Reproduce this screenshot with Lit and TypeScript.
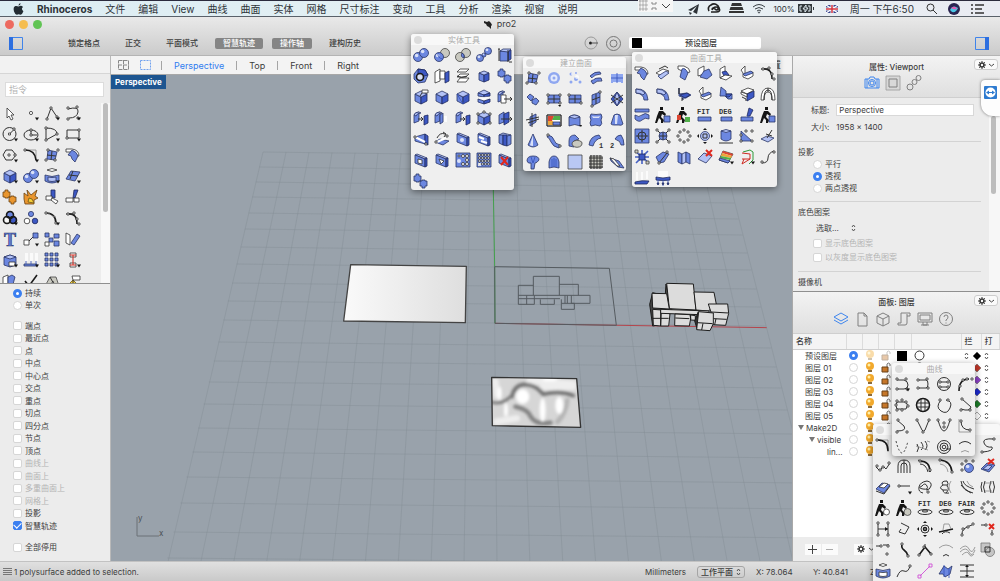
import { LitElement, html, svg, css, nothing } from "lit";
import { customElement, state } from "lit/decorators.js";
import { classMap } from "lit/directives/class-map.js";

/* ---- icon drawing helpers: every icon is a list of "class|path" parts on a 16x16 canvas ---- */
const c = (x: number, y: number, r: number) =>
  `M${x - r} ${y}a${r} ${r} 0 1 0 ${2 * r} 0a${r} ${r} 0 1 0 ${-2 * r} 0z`;
const n = (...p: number[]) => {
  let d = "";
  for (let i = 0; i < p.length; i += 2) d += `M${p[i] - 1} ${p[i + 1] - 1}h2v2h-2z`;
  return `w|${d}`;
};
const ball = (x: number, y: number, r: number) =>
  `b|${c(x, y, r)};h|${c(x - r * 0.3, y - r * 0.35, r * 0.4)}`;
const cube = "b|M2 5l6 3v7l-6-3z;d|M14 5l-6 3v7l6-3z;l|M8 2l6 3-6 3-6-3z";
const slab = "l|M2 3l2-1 10 4-2 1z;b|M2 3l10 4v8l-10-4z;d|M12 7l2-1v8l-2 1z";
const leftSlab = "b|M1 5q1-3 5-3v9l-5 2z;l|M1 5q1-3 5-3l2 1q-4 0-5 3z";
const more = "f|M12 12.5h4l-2 3z";
const man = "f|M5 0h3v3h-3zM4 4h4l3 3-1 2-3-2-1 3 3 3-1 3h-2v-3l-2-2-2 5h-2l2-7z";
const lid = "k|M1 12a7 2.5 0 1 0 14 0a7 2.5 0 1 0 -14 0zM5 11a3 1 0 1 0 6 0a3 1 0 1 0 -6 0z";
const pieces = (cls: string, dx: number) =>
  `${cls}|M${1 + dx} 3h2v-2h3v2h2v5h-2v1h-3v-1h-2zM${7 + dx} 8h2v-1h3v1h2v5h-2v2h-3v-2h-2z`;

const icons: Record<string, string> = {
  union: `${ball(5, 10, 4.5)};${ball(11, 6, 4.5)}`,
  diff: `a|${c(11, 6, 4.5)};${ball(5, 10, 4.5)};x|M4 6a5 5 0 0 0 5 6`,
  inter: `a|${c(11, 6, 4.5)};a|${c(5, 10, 4.5)};b|M7 6q3 1 2 5-4-1-2-5z`,
  split: `${ball(4, 11, 3.5)};${ball(12, 4, 3.5)};${ball(8, 8, 2)}`,
  boxcut: "d|M11 5l3-2v9l-3 2z;b|M3 4h8v10h-8z;l|M3 4l3-2h8l-3 3z;k|M2 2v12M11 3v12M1 2h2M12 15h3",
  ring: `b|M1 6l4-5 7 1 3 5-3 7-7 1-4-4z;d|M5 1l7 1 3 5-4 1-6-2z;h|${c(7, 9, 3.5)};B|${c(7, 9, 3.5)}`,
  shell: "w|M1 4l5-3v12l-5 2z;w|M6 3h5v8h-5z;d|M11 5l4-2v10l-4 2z",
  stack: "w|M2 4h9l3-3h-9zM2 9h9l3-3h-9z;w|M2 14h9l3-4h-9z;k|M2 8q4 3 10 0",
  tinycube: "b|M3 5l5 2v7l-5-2z;d|M13 5l-5 2v7l5-2z;l|M8 3l5 2-5 2-5-2z",
  join: pieces("b", 0),
  joinO: pieces("o", 0),
  cubetag: `${cube};w|M9 1h6v3h-6z;k|M9 4l-2 3`,
  cube,
  cubefold: `${cube};x|M2 5l6 10 6-10`,
  cubesplit: "l|M8 1l6 3-6 2-6-2z;b|M2 4l6 2v2l-6-1zM2 10l6 2v3l-6-2z;d|M14 4l-6 2v2l6-1zM14 10l-6 2v3l6-2z;h|M3 9q6-2 11-1l-6 3z",
  slabarrow: `${leftSlab};w|M4 6h5v8h-5z;k|M7 10h8M13 8l2 2-2 2`,
  slabpair: `${leftSlab};d|M11 6l4-1v8l-4 2z;k|M5 9h5M8 7l2 2-2 2`,
  slabone: `${leftSlab};b|M6 5l3-2v9l-3 2z;h|M10 6h3v6h-3z`,
  cubenodes: `${cube};${n(2, 4, 14, 4, 2, 13, 14, 13, 8, 2)}`,
  slabthrough: "b|M2 5l5-3v10l-5 2z;d|M7 4l5-2v10l-5 3z;k|M4 9h11M13 7l2 2-2 2",
  wedge: `b|M2 6l10-3v10l-10-3z;d|M12 3l3 2v9l-3-1z;W|M2 6l10 5;${n(2, 6, 13, 13)}`,
  rotate: `b|M1 11l5-3 9 2-6 4z;W|M3 11l9-4;k|M3 7q3-6 8-4M9 1l3 2-2 3;${n(13, 5, 2, 11)}`,
  slabhole: `${slab};h|${c(7, 9, 2)}`,
  slabslot: `${slab};W|M3 6l5 2M5 10l6 2`,
  slabbend: "l|M2 4l4-2 8 2-4 2z;b|M2 4h4v10l-4-2z;d|M6 4h4v11l-4-1z;b|M10 5l4-1v9l-4 2z",
  slabsq: `${slab};w|M5 7l4 1v4l-4-1z`,
  slabtri: `${slab};w|M5 7l5 2-3 3z`,
  grid1: `b|M1 1h14v14h-14z;h|${c(4, 9, 2)};w|${c(8, 4, 1.5)}${c(12, 4, 1.5)}${c(8, 12, 1.5)}${c(12, 12, 1.5)}${c(12, 8, 1.5)}${c(4, 4, 1)}`,
  grid2: `b|M1 1h14v14h-14z;w|${[3, 6, 9, 12].map((x) => [3, 6, 9, 12].map((y) => c(x + 0.5, y, 1.1)).join("")).join("")};h|M2 11h3v3h-3z`,
  slabdel: `${slab};r|M4 5l7 8M11 5l-7 8`,

  srfpt: `b|M4 3l9 2-2 8-8-1z;k|M8 4l-1 9M3 8l9 1;${n(4, 3, 14, 3, 11, 13, 2, 13)}`,
  glowball: `v|${c(8, 8, 6)};h|${c(8, 8, 3.5)};v|${c(8, 8, 1.5)}`,
  glowpts: `v|${c(4, 4, 1.5)}${c(9, 9, 2)}${c(4, 12, 1.5)}${c(13, 12, 1.5)}${c(9, 3, 1)};h|${c(5, 4, 1)}${c(10, 7, 2)}`,
  glowstrip: "b|M2 6q5-5 10-4l1 2q-6 0-9 4z;b|M3 11q5-4 10-3l1 3q-5-1-9 3z;h|M4 8q4-3 9-2v1q-5-1-8 3z",
  glowpatch: "v|M2 4h12v9h-12z;h|M4 12h8v1h-8z;x|M8 3v10M2 8h12",
  gems: "b|M2 6l3-3 4 3-3 4zM7 9l4-2 3 3-3 4-4-2z",
  rectcorner: `b|M2 4h12v8h-12z;k|M8 4v8M2 8h12;${n(2, 4, 14, 4, 14, 12, 2, 12)};f|M12 14h3l-1 2z`,
  rectdiag: `b|M2 4h12v8h-12z;k|M8 4v8M2 8h12;${n(2, 4, 14, 12)}`,
  rectvert: `b|M4 4l8-3v10l-8 4z;k|M4 9l8-3M8 3v10;${n(4, 15, 12, 1)}`,
  gem: "d|M8 1l6 7-6 7-6-7z;l|M8 1l3 7-3 7-3-7z;k|M2 4l12 8M14 4l-12 8",
  vplane: "b|M5 5l6-3v8l-6 4z;k|M1 8l13-3M3 11l11-4M7 1v14",
  rainbow: "w|M1 3h14v11h-14z;rd|M2 4h6l-2 5h-4z;gn|M8 4h6v4h-8z;or|M2 9h5v4h-5z;b|M7 10h7v3h-7z;k|M1 3h14v11h-14z",
  cylwall: "b|M2 5q5-4 11 0v9q-5-3-11 0z;l|M2 5q5-4 11 0-5 3-11 0z;f|M12 13h3l-1 2z",
  blob: "b|M3 2q5 1 10 0 2 3 0 6 2 4-1 6-5-2-9 0-2-3 0-6-2-3 0-6z;h|M4 4q4 1 8 0l-1 2q-3 0-6 0z",
  bell: "b|M5 3q3-2 6 0l3 9q-2 2-4 1h-5q-2 0-3-1z;h|M6 3h3l-1 9h-2z",
  cone: "b|M8 1l5 11q-5 4-10 0z;h|M8 2v11q-2 0-3-1z",
  sweep: `b|M2 2q5 1 6 5t6 5l-1 3q-6-1-8-6t-4-5z;${n(2, 2, 14, 13)}`,
  revolve: `b|M2 13v-5q0-6 6-6l4 4-5 2v6z;a|M7 8a5 3.5 0 1 0 8 3a5 3 0 0 0 -8 -3z`,
  arch1: "b|M1 12q1-9 10-10l2 3q-6 1-8 8z;t|11 15 1",
  arch2: "b|M6 6q2-4 6-4 3 4 3 10h-3q0-4-6-6z;t|1 15 2",
  parachute: "b|M2 7q0-5 6-5t6 4q-2 3-4 3l-1 6h-3v-6q-3 1-4-2z;x|M6 3l2 6 2-6",
  tomb: "b|M3 14v-6q1-6 5-6t5 6v6q-5-2-10 0z;x|M6 13v-8M8 13v-9M10 13v-8",
  pane: "p|M1 1h14v14h-14z",
  mesh: "a|M2 2h12v12h-12z;k|M1 4h14M1 7h14M1 10h14M1 13h14M3 1v14M6 1v14M9 1v14M12 1v14",
  blade: "b|M1 4l9 3 5 7-6-1-7-6z;w|M1 4l4 1 6 7-3 0z",

  sfillet: "w|M1 2h6q7 1 7 7l-4 0q0-3-4-4l-5 0z;b|M7 3q5 2 6 6l-3 6-3-3q0-4-4-4z",
  schamfer: "w|M1 8l7-4 6 2-7 5z;l|M3 11l8-5 3 2-8 6z;k|M4 4l6-3 3 2",
  sblend: "w|M2 1h6q6 2 6 6l-4 1-8-4z;b|M6 4q3-2 6 4l-3 7-5-3z",
  quarter: "w|M1 4l6-3v8l-6 2z;b|M7 6l5-2 3 6-5 4-7-2z",
  lplane: "w|M2 4l5-3v9l-5 3z;d|M4 7l4-1 3 4-4 3z;w|M7 10l7 1-6 4-6-2z",
  steps: "w|M2 5l4-4v8l8-2v4l-5 3-5-2v-4z;b|M4 9l8-3 2 2-8 3z",
  curvenodes: `B|M3 4q9-1 9 10;k|M1 4h9;${n(3, 4, 9, 3, 12, 9, 14, 14)}`,
  crescent: "b|M2 3q11-1 12 11h-4q0-6-8-7z;l|M2 3q6 0 9 4l-2 2q-2-2-7-2z",
  chair: "b|M3 2v6l8-1 4 2-5 3h-3v2l-1-3-3-1z;d|M4 9l7-2 3 2-5 3z;k|M3 2v6M6 12v3",
  zig: "b|M3 1l5 4v3h6v5h-4l-3-3h-5z;d|M8 8h6l-3 3h-3z",
  match: "w|M2 5l7-3 6 2-7 4z;d|M8 8l7-3v6l-7 4z;w|M2 6l6 2v3l-6-3z;k|M3 11l4 2v2",
  arch: "w|M1 14q0-12 7-12t7 12h-3q0-8-4-8t-4 8z;k|M4 14q0-10 4-10t4 10M8 2v4",
  ribbon: "b|M1 2h14v3h-14z;b|M1 8q4 3 7 0t7 0v4q-4-2-7 1t-7-1z",
  manbox: `${man};b|M9 9h6v6h-6z`,
  mancolor: `${man};rd|M1 8h4v5h-4z;gn|M9 10h5v5h-5z`,
  fit: "t|0 7 FIT;b|M1 10h13v4h-13z",
  deg: "t|1 7 DEG;b|M3 10h11v4h-11z",
  trimsrf: "d|M10 1l4 2-3 6h-3z;b|M2 10h12v4h-12z;x|M9 8v3",
  target: `b|M1 1h14v14h-14z;k|${c(8, 8, 4)}M8 2v12M2 8h12`,
  expand: `b|${c(8, 8, 4)};k|M1 1l4 4M15 1l-4 4M1 15l4-4M15 15l-4-4M8 4v8M4 8h8;${n(2, 2, 14, 2, 2, 14, 14, 14)}`,
  circpts: n(8, 2, 12, 4, 14, 8, 12, 12, 8, 14, 4, 12, 2, 8, 4, 4),
  gumball: `l|${c(8, 8, 4.5)};k|M6 6h4v4h-4z;f|M6 2l2-2 2 2zM6 14l2 2 2-2zM2 6l-2 2 2 2zM14 6l2 2-2 2z`,
  cylinder: "b|M3 3v8q5 4 10 0v-8z;l|M3 3q5-3 10 0-5 3-10 0z;k|M1 15h14",
  trinodes: `b|M2 13v-10l11 10z;${n(2, 13, 2, 7, 7, 3, 13, 13, 13, 3)}`,
  needle: "l|M1 11l6-3 7 2-6 4z;k|M12 2l-5 8M6 6l6 2",
  spider: "X|M1 2l14 12M14 2l-12 12M8 1v14M1 8h14;d|M5 5h6v6h-6z;a|M1 1h3v3h-3zM12 12h3v3h-3z",
  bow: `b|M1 8l7-5 6 2-5 8-5 1z;k|M4 14l8-10;${n(12, 3, 4, 14)}`,
  foldmap: "b|M2 3l4 2v10l-4-2z;l|M6 5l4-2v10l-4 2z;b|M10 3l4 2v10l-4-2z",
  srfdel: "l|M1 10l6-6 8 3-6 7z;r|M9 1l6 6M15 1l-6 6",
  rainsrf: `w|M5 2l10 3-5 9-9-3z;rd|M5 2l10 3-1 2-10-3z;or|M4 4l10 3-1 2-10-2z;gn|M3 7l10 2-1 2-10-2z;b|M2 9l10 3-2 2-9-3z;${more}`,
  redgreen: `G|M4 3l7-2 3 2v8l-4 4;R|M3 4l8 1v5l-8 5 2-5M3 10h8;${more}`,
  scurve: `k|M2 14q6 0 6-5t6-7;${n(2, 13, 14, 3)}`,
  rainarrows: "h|M2 2h2v8h-2zM7 2h2v8h-2zM12 1h2v8h-2z;d|M1 12q7-2 14-1l-2 3h-12z",
  raindown: "h|M3 1h10v6h-10z;d|M1 7q7 2 14 0v3q-7 1-14 0z;x|M3 9v6M8 9v7M13 9v6;d|M2 13h2l-1 2zM7 13h2l-1 2zM12 13h2l-1 2z",

  cursor: "w|M5 3v10l2-2 2 4 2-1-2-4h3z",
  point: `w|${c(8, 8, 1.6)};${more}`,
  polyline: `k|M3 14l4-11 6 9;${n(3, 14, 7, 3, 13, 12)};${more}`,
  curve: `k|M3 4q11-3 10 3t-9 6;${n(3, 3, 12, 2, 13, 13, 3, 14)};${more}`,
  circle: `k|${c(7.5, 8, 6.5)}M7.5 8l4-4;${n(7.5, 8, 12, 3)};${more}`,
  ellipse: `k|M1 9a7 5 0 1 0 14 0a7 5 0 1 0 -14 0M8 9h6M8 9v-5;${n(8, 9, 8, 4)};${more}`,
  arc: `k|M2 2q11 0 11 6l-11 6z;${n(2, 2, 2, 14, 13, 8)};${more}`,
  rect: `k|M2 4h12v8h-12z;${n(2, 12, 14, 4)};${more}`,
  polygon: `k|M4 3h6l4 5-4 5h-6l-3-5z;${n(7, 8, 13, 8)};${more}`,
  fillet: `g|M2 3h11v11;B|M2 3q10 0 11 10;${n(2, 3)};${more}`,
  cubeM: `${cube};${more}`,
  unionM: `${ball(5, 10, 4.5)};${ball(11, 6, 4.5)};${more}`,
  tube: `w|M3 2q5-3 10 0-5 3-10 0z;b|M1 7q7 3 14 0v6q-7 4-14 0z;l|M4 9q4 1 8 0v4q-4 1-8 0z;${more}`,
  sheet: `b|M1 11l5-8 9 1-5 9z;k|M4 7l9 1M8 3l-3 8;${more}`,
  burst: "o|M1 4l4 3-1-6 4 5 6-5-2 6 3 2-4 2 0 4h-9l-1-5z;y|M5 13l1-4 3 1 2 4z",
  trim: "d|M7 1h4v8l-4-1z;w|M2 7h6v4h-6z;w|M8 9l6 3-2 3-5-4z",
  splitc: "d|M9 1h4l-3 8h-2z;w|M1 9h7v4h-7zM9 9h5v4h-5z",
  venn: `d|${c(11, 10, 3.5)};b|${c(8, 5, 3.5)};B|${c(8, 5, 3.5)}${c(5, 10, 3.5)}${c(11, 10, 3.5)};h|${c(5, 10, 2)};${more}`,
  dots: `b|${c(8, 4, 2.6)};w|${c(4, 11, 2.8)};d|${c(12, 11, 2.8)}`,
  arcs: `B|M2 3q10 0 10 11;g|M1 3h5M8 6l4 1;${n(2, 3, 12, 13)};${more}`,
  bigT: "T|2 15 T",
  move: `k|M4 12l8-8;w|M1 9h5v5h-5z;b|M10 2h5v5h-5z;${more}`,
  copies: "b|M1 2h4v4h-4zM10 3h5v4h-5zM5 7h4v4h-4zM10 10h5v5h-5z;w|M1 11h4v4h-4z",
  mirror: "w|M1 2l4 2v10l-4-2z;b|M6 12l6-9 3 2-6 9z",
  cubebag: `b|M2 5l6-2 6 2v8l-6 2-6-2z;l|M2 5l6-2 6 2-6 2z;w|M7 10h6v4h-6z;${more}`,
  rain: `h|M2 1h3v8h-3zM7 1h3v8h-3zM12 1h3v8h-3z;b|M1 12h13v2h-13z;x|M3 9v3M8 9v3M13 9v3;${more}`,
  ninegrid: `b|${[1, 6, 11].map((x) => [1, 6, 11].map((y) => `M${x} ${y}h3v3h-3z`).join("")).join("")};${more}`,
  ibeam: `w|M5 1h6v4h-6zM5 11h6v4h-6z;R|M8 3v10M5 3h6M5 13h6;${more}`,
  twosheets: "w|M1 4l5-2v11l-5 2z;b|M6 4l4-2 3 2-3 11h-4z",
  check: "B|M2 8l4 5 8-11",
  rollers: "a|M1 13l5-9h6l3 9h-4l-2-5-4 6z;k|M6 4l5 9",
  paint: "y|M2 13l6-6 6 6z;w|M7 3h8v4h-7z;k|M8 7v3",

  c1: `k|M3 13h7q4 0 4-4t-4-5h-7;${n(3, 3, 12, 3, 3, 13, 13, 13)};${more}`,
  c2: `k|M3 4h8q2 0 2 4t-2 4h-8;${n(3, 4, 12, 3, 3, 12, 13, 12)}`,
  c3: `k|${c(8, 8, 6.5)}M4 6h7M4 11h7;${n(4, 6, 12, 6, 4, 11, 12, 11)}`,
  c4: `B|M2 15q0-12 10-12;${n(3, 10, 6, 4, 10, 3, 15, 3)}`,
  c5: `k|M3 5h9q3 3 0 7h-9q-2-3 0-7;${n(3, 4, 8, 3, 12, 5, 14, 9, 8, 13, 3, 13, 2, 8)}`,
  c6: `B|${c(8, 8, 6.5)};k|M2 6h12M2 10h12M6 2v12M10 2v12`,
  c7: `k|M5 3q-6 7 0 11t9-3-4-8;${n(4, 3, 12, 3)}`,
  c8: `k|M5 2l9 8q-1 5-10 2;${n(5, 2, 4, 13, 13, 13)}`,
  c9: `k|M3 2l7 6q3 5-7 5;${n(4, 2, 3, 14, 13, 14)}`,
  c10: `k|M2 2l5 10q1 3 3 0l4-10;${n(2, 2, 14, 2, 8, 14)}`,
  c11: `k|M2 2q6 22 12 0;${n(2, 2, 14, 2, 8, 5, 8, 9)}`,
  c12: `g|M2 1v13h12;k|M4 3q0 9 9 9;${n(4, 3, 13, 12)}`,
  c13: "D|M2 2q6 24 12 0",
  c14: "k|M2 5q3 4 0 8M6 3q4 5 0 8M10 2q4 5 0 9;g|M1 7l12 4M12 2l3 1",
  c15: `k|${c(8, 8, 6.5)}${c(8, 8, 4)}${c(8, 8, 1.8)}M10 10l5 0`,
  c16: "k|M2 5q6-5 12 0;g|M4 13q4-3 8 0",
  l1: `g|M2 3h11v12;B|M3 3q10 0 10 11;${n(2, 3)}`,
  l2: `k|M14 2q-12-1-10 4t8 4q2 4-9 5;${n(14, 2, 2, 15)}`,
  l3: `k|M1 9l4 4 3-5 3 3 4-6;${n(2, 8, 5, 12, 8, 9, 14, 5)}`,
  l4: "k|M2 15v-7q0-6 6-6t6 6v7M5 15v-7q0-3 3-3t3 3v7M8 2v13",
  l5: `B|M3 3q10 0 10 11;k|M3 6q6 0 8 8M1 2l4 2;${n(3, 3, 13, 12)}`,
  l6: `B|M2 2q11 1 12 12;g|M2 6q7 1 8 8;${n(2, 2, 14, 14)}`,
  l7: `${ball(10, 10, 4.5)};${n(3, 6, 7, 3, 14, 3, 3, 12)}`,
  l8: "b|M1 11l6-6 8 2-6 7z;l|M3 11l5-4 4 1-4 4z;r|M8 1l6 5M14 1l-6 5",
  l9: "b|M1 10l6-6 8 2-6 8z;w|M4 8l5-4 4 1-4 4z;k|M1 12l8 3 6-8",
  l10: `k|M3 7h11;${n(3, 7)};${more}`,
  l11: `k|M6 14q-5-1-4-6t8-6q5 1 4 5t-5 4M5 7q3-4 5 0t-4 3-1-3;${n(11, 13)}`,
  l12: "k|M9 2q-7 0-4 4-5 3 0 5 0 4 6 3M9 2q2 3 0 5 3 3-1 7M5 6h4M5 11h4;g|M13 2q-4 6 0 12",
  l13: "k|M2 2q1 9 12 12M2 6q3 5 10 8M4 2q1 5 11 8;g|M8 2q1 4 6 6",
  l14: "k|M5 2q-3 6 0 12M11 2q-3 6 0 12M13 2q3 6 0 12M2 3q-2 5 0 10;g|M5 4h7M5 12h7",
  l15: `${man};w|${c(11.5, 12, 3)}`,
  l16: `${man};a|${c(11.5, 12, 3.5)}`,
  l17: `t|1 6 FIT;${lid}`,
  l18: `t|1 6 DEG;${lid}`,
  l19: `t|-1 6 FAIR;${lid}`,
  l21: `k|M3 1v14M13 1v14M3 8h10;f|M10 6l3 2-3 2z;${n(3, 2, 3, 14, 13, 2, 13, 14)}`,
  l22: "k|M5 2l8 4-4 7-6-2 2-3",
  l23: `k|${c(8, 8, 4)};B|${c(8, 8, 1.5)};f|M6 2l2-2 2 2zM6 14l2 2 2-2zM2 6l-2 2 2 2zM14 6l2 2-2 2z`,
  l24: "B|M1 11l14-3;g|M5 9l1-6h5l2 5;k|M4 13q3-4 8-1",
  l25: `k|M3 14q-1-7 10-10;${n(3, 14, 4, 8, 9, 6, 14, 3)}`,
  l26: `k|M1 4h5M12 9v5;r|M9 3l5 5M14 3l-5 5;${n(6, 4, 12, 13)}`,
  l27: `k|M1 4h5M8 3h6;${n(6, 4, 13, 4, 12, 12)}`,
  l28: `B|M6 2q-1 4 2 6t4 6;${n(6, 2, 12, 14)}`,
  l29: `B|M2 13l6-8 6 7;${n(2, 13, 7, 5, 14, 12)};k|M8 2v3`,
  l30: "g|M1 6q7-6 14 0;k|M5 14q3-3 6 0",
  l31: "g|M1 7q6-6 9 0t6-2M1 10q6-6 9 0t6-2M3 13q5-5 7-1t5 0",
  l32: `e|M1 1h9v9h-9z;e|${c(10, 10, 4.5)};k|M5 5h5v5h-5z`,
  l33: "w|M4 2q4-3 8 0-4 3-8 0z;b|M1 6q7 3 14 0v7q-7 4-14 0z;w|M4 9q4 1 8 0v4q-4 1-8 0z",
  l34: `k|M1 14q3-8 7-6t6-5;${n(14, 3)}`,
  l35: "M|M3 13l10-10M1 12h3v3h-3zM12 1h3v3h-3z",
  l36: "b|M1 11l5-8 4 3 4-3-2 8-5 3-2-3z;x|M6 2v12M11 5v10",
  l37: "k|M1 2h14M1 8h14M1 14h14M8 2v12;f|M6 4h4l-2-2zM6 12h4l-2 2z",

  layers: "u|M1 6l7-4 7 4-7 4zM1 9l7 4 7-4",
  page: "s|M4 2h6l3 3v10h-9zM10 2v3h3",
  box: "s|M2 5l6-3 6 3v7l-6 3-6-3zM2 5l6 3 6-3M8 8v7",
  scroll: "s|M5 2h9v3h-3v7q0 2-2 2h-7v-2h3zM11 5v-2",
  monitor: "s|M1 2h14v9h-14zM3 4h10v5h-10zM6 11v3h4v-3M4 14h8",
  help: `s|${c(8, 8, 6.5)}M6 6q0-2 2-2t2 2-2 3v1M8 11.5v1`,
  camera: `u|M1 4h4l1-2h4l1 2h4v9h-14zM3 4v9M13 4v9${c(8, 8, 3.5)}${c(8, 8, 2)}`,
  frame: "q|M1 1h14v14h-14z;s|M4 4h8v8h-8z",
  chain: `s|${c(4, 12, 3)}${c(8.5, 7, 2.5)}${c(12.5, 3, 2.5)}`,
};

const drawPart = (part: string) => {
  const [cls, d] = part.split("|");
  if (cls === "t" || cls === "T") {
    const [x, y, label] = d.split(" ");
    return svg`<text class=${cls === "T" ? "i-T" : "i-t"} x=${x} y=${y}>${label}</text>`;
  }
  return svg`<path class=${"i-" + cls} d=${d}></path>`;
};
const icon = (name: string) => html`<svg class="ico" viewBox="0 0 16 16" aria-hidden="true">
  ${(icons[name] ?? "").split(";").filter(Boolean).map(drawPart)}
</svg>`;

const words = (s: string) => s.trim().split(/\s+/);
const solidTools = words(`union diff inter split boxcut ring shell stack tinycube join cubetag cube cubefold cubesplit slabarrow
  slabpair slabone slabpair cubenodes slabthrough wedge rotate slabhole slabslot slabbend slabsq slabtri grid1 grid2 slabdel join`);
const surfaceTools = words(`srfpt glowball glowpts glowstrip glowpatch gems rectcorner rectdiag rectvert gem vplane rainbow
  cylwall blob bell cone sweep revolve arch1 arch2 parachute tomb pane mesh blade`);
const surfaceEdit = words(`sfillet schamfer sblend quarter lplane steps curvenodes crescent crescent chair steps zig match arch
  ribbon manbox mancolor fit deg trimsrf manbox target expand circpts gumball cylinder trinodes needle
  spider bow foldmap srfdel rainsrf redgreen scurve rainarrows raindown`);
const mainTools = words(`cursor point polyline curve circle ellipse arc rect polygon fillet srfpt sfillet cubeM unionM tube sheet
  joinO burst trim splitc venn dots arcs curvenodes bigT move copies mirror cubebag rain ninegrid ibeam twosheets check rollers paint`);
const curveTools = words("c1 c2 c3 c4 c5 c6 c7 c8 c9 c10 c11 c12 c13 c14 c15 c16");
const curveEdit = words(`l1 c2 c3 c4 c5 l2 l3 l4 l5 l6 l7 l8 l9 l10 l11 l12 l13 l14 l15 l16 l17 l18 l19 circpts
  l21 l22 l23 l24 l25 l26 l27 l28 l29 l30 l31 l32 l33 l34 l35 l36 l37`);

const menus = ["文件", "编辑", "View", "曲线", "曲面", "实体", "网格", "尺寸标注", "变动", "工具", "分析", "渲染", "视窗", "说明"];
const modes: [string, boolean][] = [["锁定格点", false], ["正交", false], ["平面模式", false], ["智慧轨迹", true], ["操作轴", true], ["建构历史", false]];
const snaps: [string, string][] = [
  ["端点", ""], ["最近点", ""], ["点", ""], ["中点", ""], ["中心点", ""], ["交点", ""], ["重点", ""], ["切点", ""],
  ["四分点", ""], ["节点", ""], ["顶点", ""], ["曲线上", "off"], ["曲面上", "off"], ["多重曲面上", "off"], ["网格上", "off"],
  ["投影", ""], ["智慧轨迹", "on"],
];
const layerRows = [
  { name: "预设图层", level: 1, current: true, color: "#000000" },
  { name: "图层 01", level: 1, current: false, color: "#c0392b" },
  { name: "图层 02", level: 1, current: false, color: "#8e44c8" },
  { name: "图层 03", level: 1, current: false, color: "#1d2bd0" },
  { name: "图层 04", level: 1, current: false, color: "#1e7d2a" },
  { name: "图层 05", level: 1, current: false, color: "#ffffff" },
  { name: "Make2D", level: 0, current: false, color: "" },
  { name: "visible", level: 2, current: false, color: "" },
  { name: "lin...", level: 3, current: false, color: "" },
];

/* construction-plane grid in perspective */
const rowsY = [152, 167, 182, 197, 213, 229, 247, 264, 283, 301, 320, 342, 361, 382, 404, 428, 452, 477, 503, 532, 558];
const gridPath = () => {
  let d = "";
  for (let k = -10; k <= 10; k++) d += `M${493 + 23 * k} ${154 + k / 5}L${497 + 33 * k} 566`;
  for (const y of rowsY) {
    const t = (y - 152) / 408;
    d += `M${263 - 96 * t} ${y}L${723 + 104 * t} ${y + 6}`;
  }
  return d;
};

@customElement("app-root")
export class AppRoot extends LitElement {
  @state() private view = "Perspective";

  static styles = css`
    :host { display: block; height: 100vh; overflow: hidden; position: relative; color: #3c3c3c;
      font: 8px/12px Inter, "Noto Sans CJK SC", sans-serif; background: #ececec; }
    * { box-sizing: border-box; }
    button, input, select { font: inherit; color: inherit; margin: 0; padding: 0; border: 0; background: none; }
    button { display: block; white-space: nowrap; }
    select { appearance: none; }
    svg { display: block; overflow: visible; }
    .app { height: 100%; display: flex; flex-direction: column; }

    .menubar { flex: none; display: flex; align-items: center; height: 17px; padding: 0 16px 0 13px; gap: 13px;
      font-size: 10px; background: linear-gradient(90deg, #dcedf3, #e6f0f3 60%, #e9ebf2); color: #2e3338;
      border-top: 1px solid #2b2b3d; border-bottom: 1px solid #59616a; }
    .menubar button { flex: none; line-height: 14px; }
    .menubar .appname { font-weight: 700; }
    .extras { margin-left: auto; display: flex; align-items: center; gap: 8px; }
    .extras .clock { padding: 0 4px; }
    .power { display: flex; align-items: center; gap: 3px; font-size: 8px; padding-right: 4px; }
    .screenshot { position: absolute; left: 638px; top: 0; width: 35px; height: 12px; background: #f6f6f6; }

    .titlebar { flex: none; background: linear-gradient(#e9e9e9, #cbcbcb); border-bottom: 1px solid #b4b4b4; }
    .title { display: grid; grid-template-columns: 1fr auto 1fr; align-items: center; height: 14px; padding: 0 5px; font-size: 9px; }
    .lights { display: flex; gap: 5px; }
    .lights button { width: 9px; height: 9px; border-radius: 50%; }
    .close { background: #ed6a5f; } .mini { background: #f5bd4f; } .full { background: #61c454; }
    .name { display: flex; align-items: center; gap: 4px; }
    .toolbar { display: flex; align-items: center; justify-content: space-between; height: 24px; padding: 0 11px 0 9px; }
    .modes { display: flex; align-items: center; gap: 9px; }
    .modes .side { margin-right: 28px; }
    .mode { padding: 0 8px; height: 11px; line-height: 11px; border-radius: 2px; font-weight: 500; }
    .mode.on { background: #858585; color: #fff; }
    .layerpick { display: flex; align-items: center; gap: 8px; }
    .combo { display: flex; align-items: center; width: 132px; height: 12px; padding-left: 3px; background: #fff; border-radius: 2px; }
    .combo select { flex: 1; text-align: center; text-align-last: center; height: 12px; font-weight: 500; }
    .black { width: 10px; height: 10px; background: #000; flex: none; }

    .main { flex: 1; min-height: 0; display: grid; grid-template-columns: 111px minmax(0, 1fr) 208px; }
    .left { display: flex; flex-direction: column; min-height: 0; border-right: 1px solid #b9b9b9; background: #ececec; }
    .lefthead { flex: none; height: 18px; background: #f2f2f2; border-bottom: 1px solid #d6d6d6; }
    .command { flex: none; margin: 8px 6px 5px 5px; height: 15px; padding: 0 3px; font-size: 9px; background: #fff; border: 1px solid #dcdcdc; }
    .command::placeholder { color: #b5b5b5; opacity: 1; }
    .toolbox { flex: none; height: 182px; display: flex; justify-content: space-between; overflow: hidden; padding-top: 1px; border-bottom: 1px solid #8f8f8f; }
    .track { width: 9px; background: #f7f7f7; padding: 0 2px; }
    .thumb { height: 109px; border-radius: 3px; background: #bdbdbd; }
    .grid { display: grid; gap: 2px; grid-auto-rows: 19px; align-content: start; }
    .g4 { grid-template-columns: repeat(4, 19px); }
    .g5 { grid-template-columns: repeat(5, 19px); }
    .g6 { grid-template-columns: repeat(6, 19px); }
    .g7 { grid-template-columns: repeat(7, 19px); }
    .tool { display: grid; place-items: center; }
    .ico { width: 16px; height: 16px; }
    .snaps { flex: 1; min-height: 0; display: flex; flex-direction: column; justify-content: space-between; padding: 3px 0 8px 13px; }
    .snaps .group { display: grid; }
    .snaps .many { grid-auto-rows: 1fr; height: 213px; }
    .opt { display: flex; align-items: center; gap: 3px; height: 12px; }
    .opt.off { color: #b4b4b4; }
    .opt input, .dot { appearance: none; display: grid; place-items: center; flex: none; width: 9px; height: 9px; background: #fff; border: 1px solid #d6d6d6; border-radius: 2px; }
    .opt input[type="radio"], .dot { border-radius: 50%; }
    .opt input[type="radio"]:checked, .dot:checked { border: 3px solid #3b7ff0; }
    .opt input[type="checkbox"]:checked { border-color: #3b7ff0; background: #3b7ff0; }
    .opt input[type="checkbox"]:checked::after { content: ""; width: 4px; height: 6px; margin-top: -2px;
      border: solid #fff; border-width: 0 1px 1px 0; transform: rotate(45deg); }

    .center { display: flex; flex-direction: column; min-width: 0; }
    .tabs { flex: none; height: 19px; display: flex; align-items: center; padding: 0 11px 0 7px; font-size: 9px; background: #f3f3f3; border-bottom: 1px solid #a8a8a8; }
    .tabs .layouts { display: flex; gap: 11px; padding-right: 10px; }
    .tabs .tab { height: 9px; line-height: 9px; padding: 0 12px; border-left: 1px solid #a5a5a5; }
    .tabs .tab.on { color: #2f7cf0; }
    .tabs .last { margin-left: auto; }
    .viewport { flex: 1; min-height: 0; position: relative; background: #99a2ab; }
    .scene { width: 100%; height: 100%; overflow: hidden; }
    .vlabel { position: absolute; left: 0; top: 0; height: 14px; padding: 0 4px; line-height: 14px; font-weight: 700; color: #fff; background: #1d5590; }
    .axis { font-size: 8px; fill: #4a4f55; }

    .right { display: flex; flex-direction: column; min-height: 0; min-width: 0; border-left: 1px solid #a9a9a9; background: #ececec; }
    .phead { position: relative; flex: none; display: flex; flex-direction: column; align-items: center; background: linear-gradient(#f3f3f3, #dfdfdf); border-bottom: 1px solid #cfcfcf; }
    .phead .cap { line-height: 12px; font-weight: 500; }
    .phead .icons { display: flex; gap: 5px; }
    .props { flex: none; height: 236px; display: flex; flex-direction: column; border-bottom: 1px solid #8f8f8f; overflow: hidden; }
    .props .phead { height: 42px; padding-top: 5px; gap: 2px; }
    .props .phead .icons { padding-right: 8px; }
    .gear { position: absolute; right: 2px; top: 3px; height: 11px; padding: 0 3px; display: flex; align-items: center; gap: 3px; background: #fafafa; border: 1px solid #cdcdcd; border-radius: 3px; }
    .pbody { flex: 1; min-height: 0; display: flex; justify-content: space-between; }
    .form { flex: 1; padding: 5px 8px 0 5px; }
    .row { display: flex; align-items: center; gap: 7px; height: 14px; padding: 0 7px 0 13px; }
    .row input { flex: 1; min-width: 0; height: 12px; padding: 0 2px; background: #fff; border: 1px solid #d8d8d8; }
    .row + .row { margin-top: 3px; }
    hr { margin: 7px 0 4px; border: 0; border-top: 1px solid #d3d3d3; }
    .indent { padding-left: 15px; }
    .pbody .pick { display: flex; align-items: center; gap: 9px; margin: 4px 0 2px 18px; height: 12px; }
    .pbody .pick select { width: 26px; }
    .pbody .indent .opt.tall { height: 14px; }
    .pbody .track { width: 11px; padding: 18px 4px 0 2px; }
    .pbody .track .thumb { height: 78px; }
    .layers { flex: 1; min-height: 0; display: flex; flex-direction: column; background: #fff; overflow: hidden; }
    .layers .phead { height: 42px; padding-top: 4px; gap: 3px; }
    .layers .phead .icons { padding-right: 6px; }
    table { flex: none; width: 100%; table-layout: fixed; border-collapse: collapse; }
    th { height: 15px; padding: 0 0 0 3px; background: #f4f4f4; font-weight: 500; text-align: left; border-right: 1px solid #dcdcdc; border-bottom: 1px solid #cfcfcf; overflow: hidden; white-space: nowrap; }
    td { height: 12px; padding: 0 0 0 3px; white-space: nowrap; }
    td.lv0 { padding-left: 5px; } td.lv1 { padding-left: 12px; } td.lv2 { padding-left: 16px; } td.lv3 { padding-left: 34px; }
    .cell { display: flex; align-items: center; gap: 2px; height: 12px; }
    .lfoot { margin-top: auto; flex: none; display: flex; align-items: center; gap: 16px; height: 24px; padding: 0 12px; background: #ececec; }
    .seg { display: flex; gap: 1px; }
    .seg button { min-width: 16px; height: 11px; padding: 0 3px; display: flex; align-items: center; gap: 4px; background: #fbfbfb; }
    .status { flex: none; display: flex; align-items: center; height: 20px; padding: 0 3px; gap: 2px; background: linear-gradient(#e0e0e0, #c9c9c9); border-top: 1px solid #c2c2c2; }
    .status .msg { flex: 1; }
    .status .info { display: flex; align-items: center; gap: 11px; width: 352px; }
    .status .info .coord { width: 46px; }
    .plane { display: flex; align-items: center; height: 12px; padding: 0 3px; border: 1px solid #a5a5a5; border-radius: 3px; }
    .plane select { width: 35px; font-weight: 500; }

    .palette { position: absolute; background: #efefef; border-radius: 3px; overflow: hidden; box-shadow: 0 2px 7px rgba(0, 0, 0, 0.45); }
    .palette .bar { display: grid; grid-template-columns: 15px 1fr 15px; align-items: center; height: 11px; padding-left: 3px; text-align: center; color: #a9a9a9; background: #f8f8f8; }
    .palette .bar button { width: 8px; height: 8px; border-radius: 50%; background: #dcdcdc; }
    .solid { left: 411px; top: 34px; }
    .surface { left: 523px; top: 57px; }
    .sedit { left: 632px; top: 52px; }
    .cedit { left: 873px; top: 424px; right: 0; bottom: -2px; }
    .curves { left: 892px; top: 363px; padding-right: 1px; }
    .remote { position: absolute; right: 0; top: 80px; width: 19px; height: 36px; padding: 0 0 12px 3px; background: #fdfdfd; border-radius: 4px 0 0 12px; box-shadow: 0 0 3px rgba(0, 0, 0, 0.5); }

    .ico path { stroke-width: 0.8; stroke-linejoin: round; fill: none; stroke: none; }
    .ico .i-b { fill: #6c87e0; stroke: #2a3566; }
    .ico .i-l { fill: #b3c2f6; stroke: #2a3566; }
    .ico .i-d { fill: #3d58c4; stroke: #1f2a5c; }
    .ico .i-w { fill: #fff; stroke: #333; }
    .ico .i-h { fill: #fff; fill-opacity: 0.75; }
    .ico .i-a { fill: #c9c9c0; stroke: #444; }
    .ico .i-e { fill: #c6c6c6; stroke: #777; }
    .ico .i-v { fill: #8fa7f0; }
    .ico .i-p { fill: #b9c8f4; stroke: #444; }
    .ico .i-k { stroke: #333; stroke-width: 1; }
    .ico .i-B { stroke: #1a1a1a; stroke-width: 1.6; }
    .ico .i-D { stroke: #444; stroke-width: 1; stroke-dasharray: 2 2; }
    .ico .i-g { stroke: #888; }
    .ico .i-f { fill: #151515; }
    .ico .i-x { stroke: #3450ba; }
    .ico .i-X { stroke: #4560c4; stroke-width: 1.6; }
    .ico .i-W { stroke: #fff; stroke-width: 2; }
    .ico .i-r { stroke: #e0281e; stroke-width: 2; }
    .ico .i-R { stroke: #cf2a20; stroke-width: 1; }
    .ico .i-G { stroke: #2f9a3a; stroke-width: 1; }
    .ico .i-M { stroke: #d25fd8; stroke-width: 1; }
    .ico .i-o { fill: #e9962f; stroke: #6a4112; }
    .ico .i-y { fill: #f4cf3a; stroke: #6b551a; }
    .ico .i-rd { fill: #dc4632; } .ico .i-gn { fill: #51b04a; } .ico .i-or { fill: #eda63c; }
    .ico .i-u { stroke: #3f86ee; stroke-width: 1; }
    .ico .i-s { stroke: #808080; stroke-width: 1; }
    .ico .i-q { stroke: #9a9a9a; fill: #d8d8d8; }
    .i-t { font: 700 7px "Liberation Mono", monospace; fill: #333; }
    .i-T { font: 700 18px "Liberation Serif", serif; fill: #5f7ede; stroke: #2a3566; stroke-width: 0.6; }
  `;

  private tools(names: string[], cols: number) {
    return html`<div class="grid g${cols}">
      ${names.map((t) => html`<button class="tool" aria-label=${t}>${icon(t)}</button>`)}
    </div>`;
  }

  private palette(cls: string, title: string, names: string[], cols: number) {
    return html`<section class="palette ${cls}">
      <div class="bar"><button aria-label="关闭"></button><span>${title}</span></div>
      ${this.tools(names, cols)}
    </section>`;
  }

  private stepper() {
    return html`<svg width="5" height="8" viewBox="0 0 5 8" fill="none" stroke="#555"><path d="M1 3l1.500-2L4 3M1 5l1.500 2L4 5"/></svg>`;
  }

  private gear() {
    return html`<svg width="8" height="8" viewBox="0 0 8 8" fill="none" stroke="#333"><circle cx="4" cy="4" r="2" stroke-width="1.600"/><path d="M4 0v1.500M4 6.500V8M0 4h1.500M6.500 4H8M1.200 1.200l1 1M5.800 5.800l1 1M6.800 1.200l-1 1M1.200 6.800l1-1"/></svg>
      <svg width="5" height="4" viewBox="0 0 5 4" fill="none" stroke="#444"><path d="M0 1l2.500 2L5 1"/></svg>`;
  }

  private menubar() {
    return html`<nav class="menubar">
      <svg width="11" height="12" viewBox="0 0 11 12" fill="#222c33"><path d="M7.600 0Q7.700 2 5.500 2.700 5.400.800 7.600 0zM5.600 3.400Q8.500 2 10 4q-2.400 1.800.4 4.200Q9 12 7.400 11.700 5.700 10.900 4 11.700 2.300 12 1 8.500-.2 4 2.400 3.100q1.400-.2 3.200.3z"/></svg>
      <button class="appname">Rhinoceros</button>
      ${menus.map((m) => html`<button>${m}</button>`)}
      <div class="extras">
        <svg width="11" height="12" viewBox="0 0 11 12" fill="#2e3338"><path d="M11 1L0 7l3 1 6-5-4 6 4 2zM1 9l3 1-2 2z"/></svg>
        <svg width="14" height="11" viewBox="0 0 14 11" fill="none" stroke="#222" stroke-width="1.700"><path d="M2 8a4 4 0 0 1 2-6 5 5 0 0 1 8 3q2 4-3 4H4M5 6q1-2 3 0t3 0-2-2-4 3"/></svg>
        <svg width="15" height="11" viewBox="0 0 15 11" fill="#333"><path d="M3 0h9l1 3H2zM1.500 4h12l1 3H.5zM0 8h15v2H0z"/></svg>
        <svg width="14" height="11" viewBox="0 0 14 11" fill="none" stroke="#3a4045"><path d="M1 4q6-5 12 0M3 6q4-3 8 0M5 8q2-2 4 0"/><circle cx="7" cy="9.500" r=".6"/></svg>
        <span class="power">100%
          <svg width="16" height="9" viewBox="0 0 16 9"><path d="M0 0h14v9H0zM15 3h1v3h-1z" fill="#33383c"/><path d="M4 2H2v5h2M10 2h2v5h-2M8 1L5 5h2v3l3-4H8z" fill="none" stroke="#dfe9ef"/></svg></span>
        <svg width="12" height="8" viewBox="0 0 12 8"><path d="M0 0h12v8H0z" fill="#34408c"/><path d="M0 0l12 8M12 0L0 8" stroke="#fff" stroke-width="1.500"/><path d="M6 0v8M0 4h12" stroke="#fff" stroke-width="3"/><path d="M6 0v8M0 4h12" stroke="#d2333f" stroke-width="1.500"/></svg>
        <button class="clock">周一 下午6:50</button>
        <svg width="11" height="11" viewBox="0 0 11 11" fill="none" stroke="#333"><circle cx="4.500" cy="4.500" r="3.500"/><path d="M7 7l4 4"/></svg>
        <svg width="18" height="12" viewBox="-3 0 18 12"><circle cx="6" cy="6" r="6" fill="#2a2450"/><path d="M2 7q3-6 8-2-2 5-6 4z" fill="#4ac6e6"/><path d="M3 5q4-3 6 1-3 1-6-1z" fill="#e35bb0"/></svg>
        <svg width="13" height="10" viewBox="0 0 13 10" stroke="#333" stroke-width="1.300"><path d="M0 1h2M4 1h9M0 5h2M4 5h7M0 9h2M4 9h9"/></svg>
      </div>
    </nav>`;
  }

  private titlebar() {
    return html`<header class="titlebar">
      <div class="title">
        <div class="lights"><button class="close" aria-label="关闭"></button><button class="mini" aria-label="最小化"></button><button class="full" aria-label="全屏"></button></div>
        <div class="name"><svg width="9" height="9" viewBox="0 0 9 9"><path d="M0 1l3 1 2-1 2 2 1 2-1 1v3L5 7 3 6 2 4 0 3z" fill="#222"/></svg>pro2</div>
      </div>
      <div class="toolbar">
        <div class="modes">
          <button class="side" aria-label="左侧栏"><svg width="14" height="13" viewBox="0 0 14 13"><path d="M.5.5h13v12H.5z" fill="none" stroke="#4084ea"/><path d="M0 0h4v13H0z" fill="#2d6fe0"/></svg></button>
          ${modes.map(([label, on]) => html`<button class=${classMap({ mode: true, on })}>${label}</button>`)}
        </div>
        <div class="layerpick">
          <svg width="14" height="14" viewBox="0 0 14 14"><circle cx="7" cy="7" r="6" fill="none" stroke="#999"/><circle cx="6.500" cy="7" r="1.500" fill="#222"/><path d="M7 7h7" stroke="#555"/></svg>
          <svg width="15" height="15" viewBox="0 0 15 15" fill="none" stroke="#777"><circle cx="7.500" cy="7.500" r="7"/><circle cx="7.500" cy="7.500" r="3.500"/></svg>
          <div class="combo"><span class="black"></span><select aria-label="图层"><option>预设图层</option></select></div>
        </div>
        <button aria-label="右侧栏"><svg width="14" height="13" viewBox="0 0 14 13"><path d="M.5.5h13v12H.5z" fill="none" stroke="#4084ea"/><path d="M10 0h4v13h-4z" fill="#2d6fe0"/></svg></button>
      </div>
    </header>`;
  }

  private left() {
    return html`<aside class="left">
      <div class="lefthead"></div>
      <input class="command" placeholder="指令" aria-label="指令" />
      <div class="toolbox">${this.tools(mainTools, 4)}<div class="track"><div class="thumb"></div></div></div>
      <div class="snaps">
        <div class="group">
          <label class="opt"><input type="radio" name="mode" checked />持续</label>
          <label class="opt"><input type="radio" name="mode" />单次</label>
        </div>
        <div class="group many">
          ${snaps.map(([label, s]) => html`<label class=${classMap({ opt: true, off: s === "off" })}>
            <input type="checkbox" ?checked=${s === "on"} ?disabled=${s === "off"} />${label}</label>`)}
        </div>
        <label class="opt"><input type="checkbox" />全部停用</label>
      </div>
    </aside>`;
  }

  private scene() {
    return html`<svg class="scene" viewBox="111 75 681 486" preserveAspectRatio="xMidYMid slice">
      <defs>
        <linearGradient id="sheet"><stop offset="0" stop-color="#fafafa"/><stop offset="1" stop-color="#dedede"/></linearGradient>
        <filter id="soft" x="-50%" y="-50%" width="200%" height="200%"><feGaussianBlur stdDeviation="5"/></filter>
        <filter id="soft2" x="-50%" y="-50%" width="200%" height="200%"><feGaussianBlur stdDeviation="5"/></filter>
        <clipPath id="relief"><path d="M485 382L740 386 752 532 487 527z"/></clipPath>
      </defs>
      <path d=${gridPath()} fill="none" stroke="#828b93" stroke-width="1" opacity=".4"/>
      <path d="M137 517v19h22" fill="none" stroke="#6a7076"/>
      <text class="axis" x="138" y="521">y</text><text class="axis" x="159" y="536">x</text>
      <g transform="translate(330 250) scale(.33333)" stroke-width="3" stroke-linejoin="round">
        <path d="M490-180L494 50 495 220" fill="none" stroke="#43a04c"/>
        <path d="M495 220L1310 233" stroke="#b5444c"/>
        <path d="M62 44L409 49 406 218 41 213z" fill="url(#sheet)" stroke="#444" stroke-width="4"/>
        <path d="M494 50L838 55 859 226 495 220z" fill="none" stroke="#555b60"/>
        <path d="M565 106H610M610 136V79H688V136M688 103H745V136M565 106V163H613V136M565 136H780V160H724M565 146H690M590 136v27M631 148v15h42v-15M694 148v30h39v-18h-39M705 136v24M712 136v24M724 136v24" fill="none" stroke="#555b60"/>
        <g clip-path="url(#relief)">
          <path d="M480 380h280v160H480z" fill="#d6d6d6"/>
          <g fill="none" stroke-linecap="round" filter="url(#soft)">
            <path d="M496 395l6 40M600 392l130 10M640 410h90M500 515l60-10" stroke="#eee" stroke-width="20"/>
            <path d="M546 440q6-34 36-37 36 0 58 30 50-14 90 4" stroke="#6f6f6f" stroke-width="11"/>
            <path d="M485 457q30 8 56-17" stroke="#6f6f6f" stroke-width="8"/>
            <path d="M556 470q38 8 46 30 16 26 60 18" stroke="#808080" stroke-width="13"/>
            <path d="M712 450q-4 40-30 66" stroke="#b4b4b4" stroke-width="14"/>
          </g>
          <g fill="#fff" filter="url(#soft2)"><ellipse cx="578" cy="440" rx="20" ry="22"/><ellipse cx="688" cy="466" rx="12" ry="26"/><ellipse cx="638" cy="480" rx="9" ry="36"/><ellipse cx="528" cy="480" rx="6" ry="22"/><ellipse cx="660" cy="388" rx="24" ry="6"/><ellipse cx="508" cy="430" rx="6" ry="20"/></g>
        </g>
        <path d="M485 382L740 386 752 532 487 527z" fill="none" stroke="#333" stroke-width="4"/>
        <g stroke="#1c1c1c" stroke-width="3" fill="#dcdcdc">
          <path d="M968 128l-9 35 9 65 24-4v-90z" fill="#444"/>
          <path d="M1008 102l-2 30 10 50h10z" fill="#444"/>
          <path d="M1010 100l80 2 8 78-80-4z"/>
          <path d="M966 130l44 1 8 46-50-3z"/>
          <path d="M1092 126l60 1 7 36-24 20-37-3z"/>
          <path d="M968 178l26 2-2 48-22-2zM968 205h48M992 180l28 12-4 36h-24z"/>
          <path d="M992 178l145 5v12l-145-5z"/>
          <path d="M1035 192l45 2 2 12-4 22-44-1zM1036 204l42 2M1082 195l14 2v14l-14-1z"/>
          <path d="M1135 162l58 0 3 28-9 36-38-2-5-34z"/><path d="M1143 186l52 3M1150 206l40 2M1158 206l-4 18"/>
          <path d="M1105 185l-11 28 8 26z" fill="#333"/>
          <path d="M1106 185l44 4 0 32-10 21-40-3 2-20z"/><path d="M1102 218l46 3M1119 220l-4 20" fill="none"/>
        </g>
      </g>
    </svg>`;
  }

  private center() {
    return html`<main class="center">
      <div class="tabs">
        <div class="layouts">
          <svg width="11" height="10" viewBox="0 0 11 10" fill="none" stroke="#888"><path d="M.5.5h10v9H.5zM5.500 0v10M0 5h11" stroke-dasharray="4 1"/></svg>
          <svg width="11" height="10" viewBox="0 0 11 10" fill="none" stroke="#6fa0ee" stroke-dasharray="2 1"><path d="M.5.5h10v9H.5z"/></svg>
        </div>
        ${["Perspective", "Top", "Front", "Right"].map((v) => html`<button class=${classMap({ tab: true, on: v === this.view })}
          @click=${() => (this.view = v)}>${v}</button>`)}
        <button class="last">配置</button>
      </div>
      <div class="viewport">${this.scene()}<button class="vlabel">${this.view}</button></div>
    </main>`;
  }

  private right() {
    return html`<aside class="right">
      <section class="props">
        <div class="phead"><span class="cap">属性: Viewport</span>
          <div class="icons">${["camera", "frame", "chain"].map((i) => html`<button aria-label=${i}>${icon(i)}</button>`)}</div>
          <button class="gear" aria-label="选项">${this.gear()}</button>
        </div>
        <div class="pbody">
          <div class="form">
            <div class="row"><label for="cap">标题:</label><input id="cap" .value=${"Perspective"} /></div>
            <div class="row"><span>大小:</span><span>1958 x 1400</span></div>
            <hr />投影
            <div class="indent">
              <label class="opt"><input type="radio" name="proj" />平行</label>
              <label class="opt"><input type="radio" name="proj" checked />透视</label>
              <label class="opt"><input type="radio" name="proj" />两点透视</label>
            </div>
            <hr />底色图案
            <div class="pick"><select aria-label="底色图案"><option>选取...</option></select>${this.stepper()}</div>
            <div class="indent">
              <label class="opt tall off"><input type="checkbox" disabled />显示底色图案</label>
              <label class="opt tall off"><input type="checkbox" disabled />以灰度显示底色图案</label>
            </div>
            <hr />摄像机
          </div>
          <div class="track"><div class="thumb"></div></div>
        </div>
      </section>
      <section class="layers">
        <div class="phead"><span class="cap">面板: 图层</span>
          <div class="icons">${["layers", "page", "box", "scroll", "monitor", "help"].map((i) => html`<button aria-label=${i}>${icon(i)}</button>`)}</div>
          <button class="gear" aria-label="选项">${this.gear()}</button>
        </div>
        <table>
          <colgroup><col width="53" /><col width="16" /><col width="16" /><col width="16" /><col width="17" /><col width="50" /><col width="9" /><col width="11" /><col /></colgroup>
          <thead><tr><th>名称</th><th></th><th></th><th></th><th></th><th></th><th colspan="2">拦</th><th>打</th></tr></thead>
          <tbody>${layerRows.map((r) => this.layerRow(r))}</tbody>
        </table>
        <div class="lfoot">
          <div class="seg"><button aria-label="新增"><svg width="9" height="9" viewBox="0 0 9 9" stroke="#444"><path d="M4.500 0v9M0 4.500h9"/></svg></button>
          <button aria-label="删除"><svg width="9" height="9" viewBox="0 0 9 9" stroke="#aaa"><path d="M1 4.500h7"/></svg></button></div>
          <div class="seg"><button aria-label="设置">${this.gear()}</button></div>
        </div>
      </section>
    </aside>`;
  }

  private layerRow(r: (typeof layerRows)[number]) {
    const fade = r.current ? ".4" : "1";
    return html`<tr>
      <td class="lv${r.level}"><span class="cell">${r.level === 0 || r.level === 2
        ? html`<svg width="6" height="5" viewBox="0 0 6 5"><path d="M0 0h6L3 5z" fill="#777"/></svg>` : nothing}${r.name}</span></td>
      <td><input class="dot" type="radio" name="layer" aria-label=${r.name} ?checked=${r.current} /></td>
      <td><svg width="10" height="11" viewBox="0 0 10 11" opacity=${fade}><circle cx="5" cy="4" r="4" fill="#f2a92c"/><circle cx="4" cy="3" r="1.500" fill="#fff0a8"/><path d="M3 8h4v2H3z" fill="#8a6a3a"/></svg></td>
      <td><svg width="10" height="11" viewBox="0 0 10 11" opacity=${fade}><path d="M6 5V2q1-2 3 0v2" fill="none" stroke="#777"/><path d="M1 5h6v5H1z" fill="#c8782a" stroke="#6b4218"/></svg></td>
      <td>${r.current ? html`<svg width="10" height="10"><rect width="10" height="10"/></svg>` : nothing}</td>
      <td><svg width="11" height="11" viewBox="0 0 11 11"><circle cx="5.500" cy="5.500" r="4.500" fill="#fff" stroke="#333"/></svg></td>
      <td><span class="cell">${r.color ? this.stepper() : nothing}</span></td>
      <td><span class="cell">${r.color ? html`<svg width="8" height="8" viewBox="0 0 8 8"><path d="M4 0l4 4-4 4-4-4z" fill=${r.color} stroke="#555" stroke-width=".5"/></svg>` : nothing}</span></td>
      <td><span class="cell">${r.color ? this.stepper() : nothing}</span></td>
    </tr>`;
  }

  render() {
    return html`
      <div class="app">
        ${this.menubar()} ${this.titlebar()}
        <div class="main">${this.left()} ${this.center()} ${this.right()}</div>
        <footer class="status">
          <svg width="9" height="8" viewBox="0 0 9 8" stroke="#777"><path d="M0 .5h9M0 2.500h9M0 4.500h9M0 6.500h9"/></svg>
          <span class="msg">1 polysurface added to selection.</span>
          <div class="info"><span>Millimeters</span>
            <div class="plane"><select aria-label="工作平面"><option>工作平面</option></select>${this.stepper()}</div>
            <span class="coord">X: 78.064</span><span class="coord">Y: 40.841</span><span>Z</span></div>
        </footer>
      </div>
      <div class="screenshot"><svg width="35" height="12" viewBox="0 0 35 12" fill="none" stroke="#888"><path d="M2 0v11M5 0v11M8 0v11M1 1h9M1 5h9M1 9h9" opacity=".6"/><path d="M13 3h2v2M19 3h-2v2M13 9h2v-2M19 9h-2v-2"/><path d="M24 4l4 4 4-4" stroke="#444"/></svg></div>
      ${this.palette("solid", "实体工具", solidTools, 5)}
      ${this.palette("surface", "建立曲面", surfaceTools, 5)}
      ${this.palette("sedit", "曲面工具", surfaceEdit, 7)}
      ${this.palette("cedit", "", curveEdit, 6)}
      ${this.palette("curves", "曲线", curveTools, 4)}
      <button class="remote" aria-label="TeamViewer"><svg width="13" height="13" viewBox="0 0 13 13"><rect width="13" height="13" rx="1" fill="#2e7bd0"/><circle cx="6.500" cy="6.500" r="5" fill="#fff"/><path d="M2 6.500l3-2v1.500h3v-1.500l3 2-3 2v-1.500h-3v1.500z" fill="#2e7bd0"/></svg></button>
    `;
  }
}
